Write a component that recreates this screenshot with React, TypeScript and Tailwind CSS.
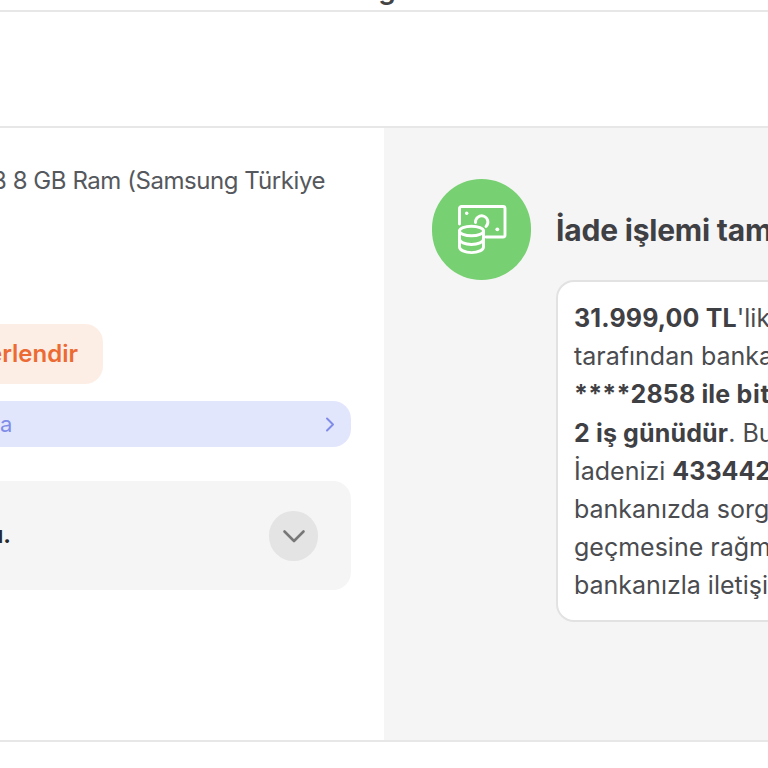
import React from "react";

const font = { fontFamily: "Inter, 'Noto Sans', sans-serif" };

function MoneyIcon() {
  return (
    <svg width="50" height="52" viewBox="0 0 50 52" fill="none" stroke="#fff" strokeWidth="2.900" strokeLinecap="round" strokeLinejoin="round">
      <path d="M2.500 20V4.500a2 2 0 0 1 2-2h41.500a2 2 0 0 1 2 2V31a2 2 0 0 1-2 2H29" />
      <circle cx="9.700" cy="9.300" r="1.700" fill="#fff" stroke="none" />
      <circle cx="40.300" cy="25.300" r="1.900" fill="#fff" stroke="none" />
      <path d="M18.500 18.500a6.200 6.200 0 1 1 10.500 4" />
      <ellipse cx="14.500" cy="27" rx="12" ry="4.800" />
      <path d="M2.500 27v16c0 3 5.400 5.600 12 5.600s12-2.600 12-5.600V27" />
      <path d="M2.500 35c0 3 5.400 5.500 12 5.500s12-2.500 12-5.500" />
    </svg>
  );
}

export default function App() {
  return (
    <div style={font} className="w-[768px] h-[768px] overflow-hidden bg-white flex flex-col">
      <div className="h-[12px] shrink-0 border-b-2 border-[#e7e7e7] overflow-hidden relative">
        <div className="flex justify-center pl-[6px] -mt-[25px] text-[28px] leading-[28px] font-semibold text-[#444]">g</div>
      </div>
      <div className="h-[116px] shrink-0 border-b-2 border-[#e7e7e7]" />
      <div className="flex h-[614px] shrink-0 border-b-2 border-[#e7e7e7]">
        <div className="w-[384px] shrink-0 overflow-hidden pr-[33px] flex flex-col">
          <div className="flex justify-end pt-[38px] pr-[26px] text-[24px] leading-[30px] tracking-[-0.450px] text-[#55585c] whitespace-nowrap">
            128 GB 8 GB Ram (Samsung Türkiye
          </div>
          <div className="flex justify-end w-[103px] mt-[128px]">
            <div className="shrink-0 h-[60px] rounded-[18px] bg-[#fdeee5] pl-[20px] pr-[25px] flex items-center text-[24px] font-semibold text-[#ec6a34] whitespace-nowrap">
              Ürünü Değerlendir
            </div>
          </div>
          <div className="mt-[17px] h-[46px] rounded-r-[18px] bg-[#e2e6fc] flex items-center justify-between pr-[16px] text-[22px] text-[#7f8ce8]">
            <span>a</span>
            <svg width="10" height="15" viewBox="0 0 10 15" fill="none" stroke="#7f8ce8" strokeWidth="2" strokeLinecap="round" strokeLinejoin="round">
              <path d="M2 1.500l6 6-6 6" />
            </svg>
          </div>
          <div className="mt-[34px] h-[109px] rounded-r-[18px] bg-[#f5f5f5] flex items-center justify-between pr-[33px]">
            <span className="-ml-[11px] text-[23px] font-bold text-[#26282b]">u.</span>
            <div className="w-[49px] h-[50px] rounded-full bg-[#e4e4e4] flex items-center justify-center">
              <svg width="24" height="16" viewBox="0 0 24 16" fill="none" stroke="#777" strokeWidth="2.600" strokeLinecap="round" strokeLinejoin="round">
                <path d="M2.500 3.500l9.500 9.500 9.500-9.500" />
              </svg>
            </div>
          </div>
        </div>
        <div className="flex-1 bg-[#f5f5f5] overflow-hidden pl-[48px] pt-[51px]">
          <div className="flex items-center h-[101px]">
            <div className="w-[99px] h-[101px] rounded-full bg-[#77d071] shrink-0 flex items-center justify-center">
              <MoneyIcon />
            </div>
            <div className="ml-[25px] pt-[2px] text-[30px] tracking-[-0.200px] font-bold text-[#3f4044] whitespace-nowrap">İade işlemi tamamlandı</div>
          </div>
          <div className="ml-[124px] w-[500px] h-[342px] rounded-[18px] border-2 border-[#e2e2e2] bg-white pl-[16px] pt-[17px] text-[25px] leading-[38.200px] text-[#4a4c50] whitespace-nowrap">
            <div><b className="font-bold tracking-[0.150px] text-[#3f4044]">31.999,00 TL</b>'lik iade</div>
            <div>tarafından bankanıza</div>
            <div><b className="font-bold tracking-[0.150px] text-[#3f4044]">****2858 ile </b><b className="font-bold tracking-[0.800px] text-[#3f4044]">biten</b></div>
            <div><b className="font-bold tracking-[0.150px] text-[#3f4044]">2 iş günüdür</b>. Bu süre</div>
            <div>İadenizi <b className="font-bold text-[#3f4044]">433442</b></div>
            <div>bankanızda sorgulayın</div>
            <div>geçmesine rağmen</div>
            <div>bankanızla iletişime</div>
          </div>
        </div>
      </div>
    </div>
  );
}
